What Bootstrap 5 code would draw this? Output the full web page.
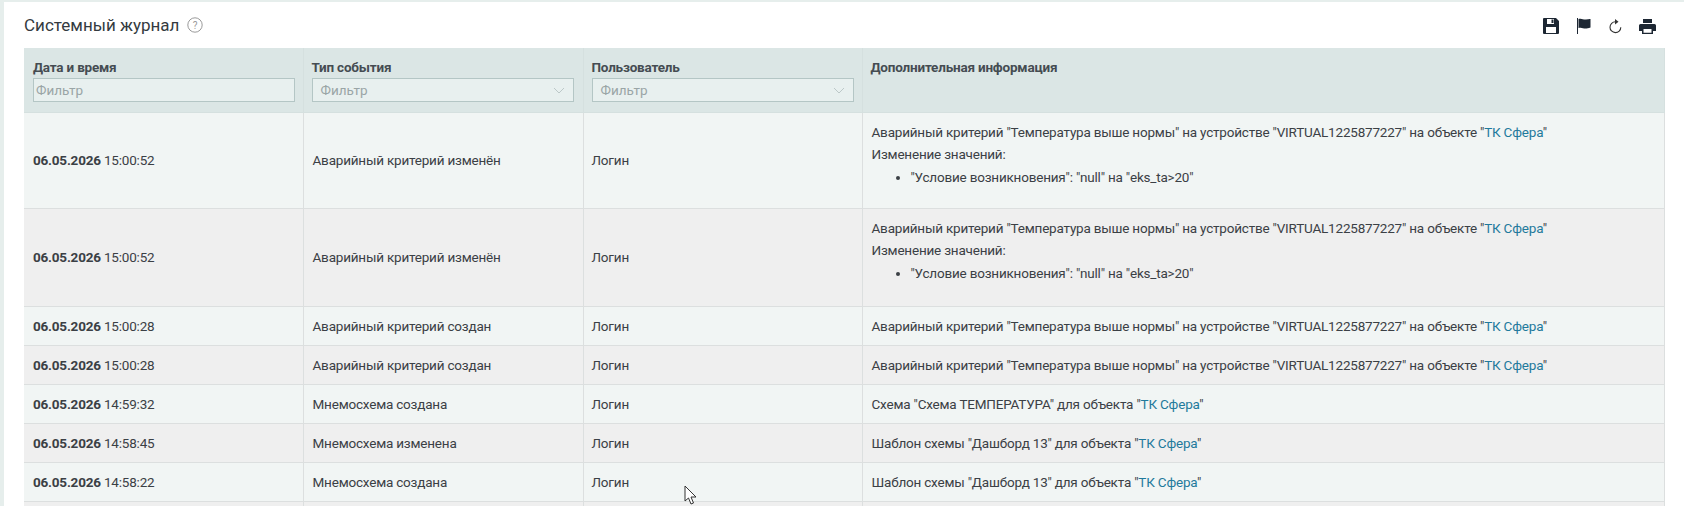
<!DOCTYPE html>
<html lang="ru">
<head>
    <meta charset="UTF-8">
    <title>Системный журнал</title>
    <link href="https://cdn.jsdelivr.net/npm/bootstrap@5.3.0/dist/css/bootstrap.min.css" rel="stylesheet">
    <style>
        html, body { height: 506px; overflow: hidden; }
        body { background: #e6eeec; font-family: Roboto, "Liberation Sans", sans-serif; font-size: 13.5px; color: #3b4045; padding: 2px 0 0 4px; }
        .journal-panel { background: #fff; height: 504px; padding: 0 20px 0 20px; position: relative; overflow: hidden; }
        .journal-head { height: 46px; }
        .journal-title { font-size: 17px; line-height: 24px; margin: 0; font-weight: 400; color: #343a40; }
        .tool-icons { padding-top: 2px; }
        .tool-icons svg { display: block; fill: #1d2733; }
        .journal-table { table-layout: fixed; width: 1640px; margin: 0; border-collapse: collapse; }
        .journal-table th, .journal-table td { border: 1px solid #dcdfdf; border-width: 0 1px 1px 0; padding: 8px 8px 8px 9px; line-height: 22px; vertical-align: middle; color: #3b4045; font-weight: 400; letter-spacing: -.2px; }
        .journal-table th { background: #dbe6e5; height: 64px; vertical-align: top; padding-top: 8px; padding-bottom: 0; border-color: #d5e0df; font-weight: 700; color: #454c52; }
        .journal-table th:not(:first-child), .journal-table td:nth-child(3) { padding-left: 8px; }
        .journal-table tbody tr:nth-child(odd) td { background: #f1f5f4; }
        .journal-table tbody tr:nth-child(even) td { background: #efefef; }
        .journal-table .line-cell { height: 39px; }
        .journal-table td.info-cell { vertical-align: top; }
        .filter-box { display: flex; align-items: center; justify-content: space-between; height: 24px; width: 262px; background: #e8f0ef; border: 1px solid #b4c6c5; padding: 0 2px; font-weight: 400; color: #9aa5a6; line-height: 22px; letter-spacing: 0; }
        .filter-pick { padding: 0 8px; }
        .info-list { margin: 1px 0 0; padding-left: 39px; }
        .info-wrap { padding-bottom: 12px; }
        .info-wrap-tall { padding-bottom: 14px; }
        a.obj-link { color: #1f7a9c; text-decoration: none; }
        .mouse-arrow { position: absolute; left: 680px; top: 483px; }
        .help-mark { width: 16px; height: 16px; }
    </style>
</head>
<body>
    <div class="journal-panel">
        <div class="journal-head d-flex align-items-center justify-content-between">
            <div class="d-flex align-items-center gap-2">
                <h1 class="journal-title">Системный журнал</h1>
                <svg class="help-mark" viewBox="0 0 16 16"><circle cx="8" cy="8" r="7.2" fill="none" stroke="#9a9a9a"/><text x="8" y="11.5" font-size="10" text-anchor="middle" fill="#9a9a9a" font-family="Roboto">?</text></svg>
            </div>
            <div class="tool-icons d-flex align-items-center">
                <svg width="16" height="16" viewBox="0 0 16 16"><path fill-rule="evenodd" d="M0 1a1 1 0 0 1 1-1h12l3 3v12a1 1 0 0 1-1 1H1a1 1 0 0 1-1-1zM4 1v5h7V1zM8.500 1.500h2v3.500h-2zM3 9v6h10V9z"/></svg>
                <svg width="14" height="16" viewBox="0 0 14 16" style="margin-left:18px"><path d="M0 0h1v16H0zM1.500 1c3-1.200 5 1 7.500 .5 2-.3 3.500-.8 4.500-.5v8.500c-2 .8-3.500 1-5 1-2.500 0-4-1.500-7-.5z"/></svg>
                <svg width="14" height="15" viewBox="0 0 14 15" style="margin-left:17px"><path d="M7.500 2.800A5.400 5.400 0 1 0 12.800 8.200" fill="none" stroke="#333" stroke-width="1.100"/><path d="M7 0l3.500 2.800L7 5.500z" fill="#333"/></svg>
                <svg width="17" height="15" viewBox="0 0 17 15" style="margin-left:17px;margin-right:8px"><path fill-rule="evenodd" d="M4 0h9v4H4zM1.500 5h14A1.500 1.500 0 0 1 17 6.500V12h-3v3H3v-3H0V6.500A1.500 1.500 0 0 1 1.500 5zM4.500 10v3.800h8V10z"/></svg>
            </div>
        </div>
        <table class="journal-table">
            <colgroup><col style="width:279px"><col style="width:280px"><col style="width:279px"><col style="width:802px"></colgroup>
            <thead>
                <tr>
                    <th>Дата и время<div class="filter-box">Фильтр</div></th>
                    <th>Тип события<div class="filter-box filter-pick">Фильтр <svg width="12" height="7" viewBox="0 0 12 7"><path d="M1 1l5 5 5-5" fill="none" stroke="#bcc8c8"/></svg></div></th>
                    <th>Пользователь<div class="filter-box filter-pick">Фильтр <svg width="12" height="7" viewBox="0 0 12 7"><path d="M1 1l5 5 5-5" fill="none" stroke="#bcc8c8"/></svg></div></th>
                    <th>Дополнительная информация</th>
                </tr>
            </thead>
            <tbody>
                <tr>
                    <td><b>06.05.2026</b> 15:00:52</td>
                    <td>Аварийный критерий изменён</td>
                    <td>Логин</td>
                    <td class="info-cell"><div class="info-wrap">Аварийный критерий "Температура выше нормы" на устройстве "VIRTUAL1225877227" на объекте "<a class="obj-link" href="#">ТК Сфера</a>"<br>Изменение значений:<ul class="info-list"><li>"Условие возникновения": "null" на "eks_ta&gt;20"</li></ul></div></td>
                </tr>
                <tr>
                    <td><b>06.05.2026</b> 15:00:52</td>
                    <td>Аварийный критерий изменён</td>
                    <td>Логин</td>
                    <td class="info-cell"><div class="info-wrap-tall">Аварийный критерий "Температура выше нормы" на устройстве "VIRTUAL1225877227" на объекте "<a class="obj-link" href="#">ТК Сфера</a>"<br>Изменение значений:<ul class="info-list"><li>"Условие возникновения": "null" на "eks_ta&gt;20"</li></ul></div></td>
                </tr>
                <tr>
                    <td class="line-cell"><b>06.05.2026</b> 15:00:28</td>
                    <td class="line-cell">Аварийный критерий создан</td>
                    <td class="line-cell">Логин</td>
                    <td class="line-cell">Аварийный критерий "Температура выше нормы" на устройстве "VIRTUAL1225877227" на объекте "<a class="obj-link" href="#">ТК Сфера</a>"</td>
                </tr>
                <tr>
                    <td class="line-cell"><b>06.05.2026</b> 15:00:28</td>
                    <td class="line-cell">Аварийный критерий создан</td>
                    <td class="line-cell">Логин</td>
                    <td class="line-cell">Аварийный критерий "Температура выше нормы" на устройстве "VIRTUAL1225877227" на объекте "<a class="obj-link" href="#">ТК Сфера</a>"</td>
                </tr>
                <tr>
                    <td class="line-cell"><b>06.05.2026</b> 14:59:32</td>
                    <td class="line-cell">Мнемосхема создана</td>
                    <td class="line-cell">Логин</td>
                    <td class="line-cell">Схема "Схема ТЕМПЕРАТУРА" для объекта "<a class="obj-link" href="#">ТК Сфера</a>"</td>
                </tr>
                <tr>
                    <td class="line-cell"><b>06.05.2026</b> 14:58:45</td>
                    <td class="line-cell">Мнемосхема изменена</td>
                    <td class="line-cell">Логин</td>
                    <td class="line-cell">Шаблон схемы "Дашборд 13" для объекта "<a class="obj-link" href="#">ТК Сфера</a>"</td>
                </tr>
                <tr>
                    <td class="line-cell"><b>06.05.2026</b> 14:58:22</td>
                    <td class="line-cell">Мнемосхема создана</td>
                    <td class="line-cell">Логин</td>
                    <td class="line-cell">Шаблон схемы "Дашборд 13" для объекта "<a class="obj-link" href="#">ТК Сфера</a>"</td>
                </tr>
                <tr>
                    <td class="line-cell"></td><td class="line-cell"></td><td class="line-cell"></td><td class="line-cell"></td>
                </tr>
            </tbody>
        </table>
        <svg class="mouse-arrow" width="14" height="21" viewBox="0 0 14 21"><path d="M1 1v15l3.500-3 2.500 6 2.500-1-2.500-6h5z" fill="#fff" stroke="#333"/></svg>
    </div>
    <script src="https://cdn.jsdelivr.net/npm/bootstrap@5.3.0/dist/js/bootstrap.bundle.min.js"></script>
</body>
</html>
